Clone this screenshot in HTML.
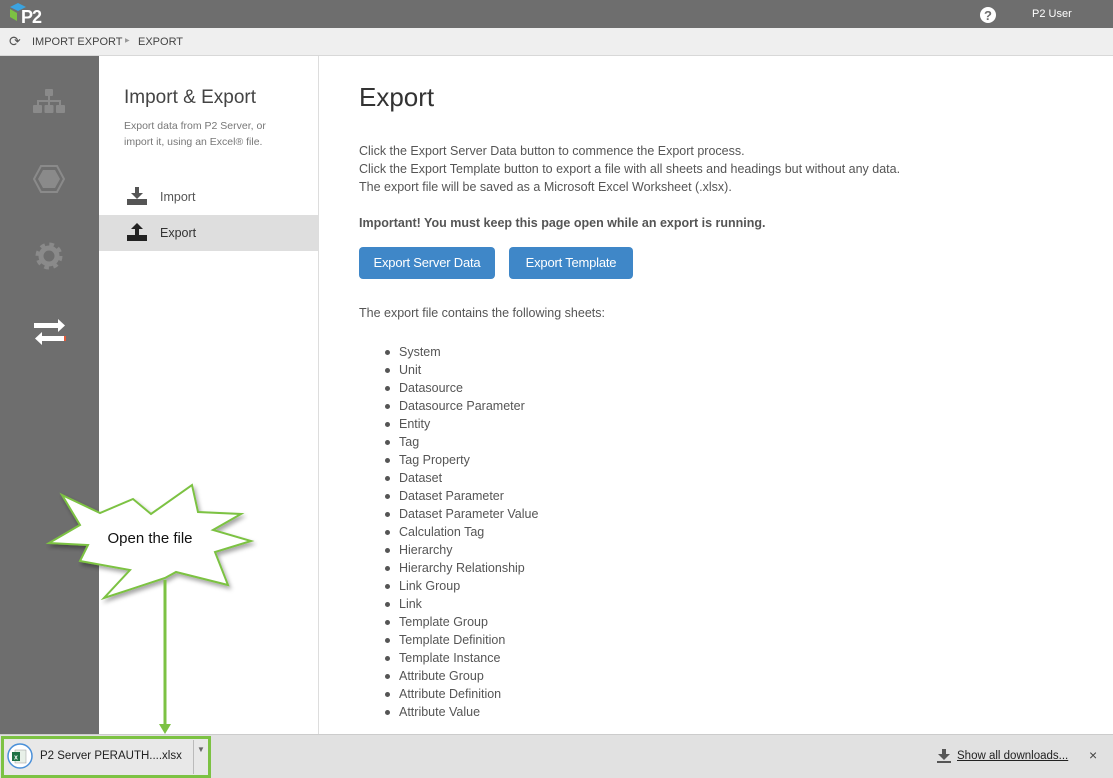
<!DOCTYPE html>
<html><head><style>
*{margin:0;padding:0;box-sizing:border-box}
body{width:1113px;height:778px;overflow:hidden;font-family:"Liberation Sans",sans-serif;background:#fff;position:relative;color:#555}
.top{position:absolute;left:0;top:0;width:1113px;height:28px;background:#6e6e6e}
.bc{position:absolute;left:0;top:28px;width:1113px;height:28px;background:#efefef;border-bottom:1px solid #d8d8d8;font-size:11px;color:#444}
.side{position:absolute;left:0;top:56px;width:99px;height:678px;background:#6e6e6e}
.panel{position:absolute;left:99px;top:56px;width:220px;height:678px;background:#fff;border-right:1px solid #ddd}
.dl{position:absolute;left:0;top:734px;width:1113px;height:44px;background:#e1e1e1;border-top:1px solid #ccc}
.btn{position:absolute;top:247px;height:32px;background:#3f87c8;color:#fff;font-size:13px;border-radius:4px;text-align:center;line-height:32px;letter-spacing:-0.2px}
ul{position:absolute;left:399px;top:343px;list-style:none;font-size:12.5px;color:#555}
ul li{height:18px;line-height:18px;position:relative}
ul li:before{content:"";position:absolute;left:-14px;top:7px;width:5px;height:5px;border-radius:50%;background:#555}
p{position:absolute;left:359px;font-size:12.5px;color:#555;white-space:nowrap}
</style></head><body>
<div class="top">
<svg style="position:absolute;left:8px;top:3px" width="44" height="22"><polygon points="2,4 10,0 18,4 10,8" fill="#3aa3e0"/><polygon points="2,6 9,10 9,18 2,14" fill="#7cc243"/><text x="13" y="20" font-family="Liberation Sans" font-weight="bold" font-size="18" fill="#fff" letter-spacing="-1">P2</text></svg>
<svg style="position:absolute;left:979px;top:6px" width="18" height="18"><circle cx="9" cy="9" r="8" fill="#fff"/><text x="9" y="14" text-anchor="middle" font-family="Liberation Sans" font-weight="bold" font-size="13" fill="#6e6e6e">?</text></svg>
<div style="position:absolute;left:1032px;top:8px;font-size:11px;color:#fff">P2 User</div>
</div>
<div class="bc">
<span style="position:absolute;left:9px;top:5px;font-size:14px;color:#555">⟳</span>
<span style="position:absolute;left:32px;top:8px">IMPORT EXPORT</span>
<span style="position:absolute;left:125px;top:9px;font-size:6px;color:#999">▶</span>
<span style="position:absolute;left:138px;top:8px">EXPORT</span>
</div>
<div class="side">
<svg style="position:absolute;left:33px;top:33px" width="32" height="28" fill="#8a8a8a"><rect x="12" y="0" width="8" height="7" rx="1"/><rect x="15" y="7" width="2" height="5"/><rect x="4" y="11" width="24" height="2"/><rect x="4" y="11" width="2" height="5"/><rect x="26" y="11" width="2" height="5"/><rect x="15" y="11" width="2" height="5"/><rect x="0" y="16" width="9" height="8" rx="1"/><rect x="11.5" y="16" width="9" height="8" rx="1"/><rect x="23" y="16" width="9" height="8" rx="1"/></svg>
<svg style="position:absolute;left:33px;top:108px" width="32" height="30"><polygon points="8,2 24,2 31,15 24,28 8,28 1,15" fill="none" stroke="#8a8a8a" stroke-width="2"/><polygon points="10,6 22,6 27,15 22,24 10,24 5,15" fill="#8a8a8a"/></svg>
<svg style="position:absolute;left:35px;top:186px" width="28" height="28"><circle cx="14" cy="14" r="10" fill="none" stroke="#8a8a8a" stroke-width="7" stroke-dasharray="4 3.85"/><circle cx="14" cy="14" r="8" fill="none" stroke="#8a8a8a" stroke-width="5"/></svg>
<svg style="position:absolute;left:33px;top:262px" width="34" height="30" fill="#fff"><rect x="1" y="5" width="26" height="5"/><polygon points="25,1 32,7.5 25,14"/><rect x="7" y="18" width="26" height="5"/><polygon points="9,14 2,20.5 9,27"/><rect x="31" y="18" width="2" height="5" fill="#e05a3a"/></svg>
</div>
<div class="panel">
<div style="position:absolute;left:25px;top:31px;font-size:19px;color:#444">Import &amp; Export</div>
<div style="position:absolute;left:25px;top:62px;font-size:10.5px;line-height:16px;color:#777">Export data from P2 Server, or<br>import it, using an Excel® file.</div>
<svg style="position:absolute;left:28px;top:131px" width="20" height="18" fill="#555"><rect x="8" y="0" width="4" height="7"/><polygon points="4,6 16,6 10,12"/><rect x="0" y="12" width="20" height="6"/></svg>
<div style="position:absolute;left:61px;top:134px;font-size:12.5px;color:#555">Import</div>
<div style="position:absolute;left:0;top:159px;width:219px;height:36px;background:#dedede"></div>
<svg style="position:absolute;left:28px;top:167px" width="20" height="18" fill="#222"><polygon points="4,6 16,6 10,0"/><rect x="8" y="5" width="4" height="7"/><rect x="0" y="12" width="20" height="6"/></svg>
<div style="position:absolute;left:61px;top:170px;font-size:12.5px;color:#333">Export</div>
</div>
<div style="position:absolute;left:359px;top:82px;font-size:26px;color:#333">Export</div>
<p style="top:142px;line-height:18px">Click the Export Server Data button to commence the Export process.<br>Click the Export Template button to export a file with all sheets and headings but without any data.<br>The export file will be saved as a Microsoft Excel Worksheet (.xlsx).</p>
<p style="top:216px;font-weight:bold">Important! You must keep this page open while an export is running.</p>
<div class="btn" style="left:359px;width:136px">Export Server Data</div>
<div class="btn" style="left:509px;width:124px">Export Template</div>
<p style="top:306px">The export file contains the following sheets:</p>
<ul>
<li>System</li><li>Unit</li><li>Datasource</li><li>Datasource Parameter</li><li>Entity</li><li>Tag</li><li>Tag Property</li><li>Dataset</li><li>Dataset Parameter</li><li>Dataset Parameter Value</li><li>Calculation Tag</li><li>Hierarchy</li><li>Hierarchy Relationship</li><li>Link Group</li><li>Link</li><li>Template Group</li><li>Template Definition</li><li>Template Instance</li><li>Attribute Group</li><li>Attribute Definition</li><li>Attribute Value</li>
</ul>
<div class="dl">
<div style="position:absolute;left:1px;top:1px;width:210px;height:42px;border:3px solid #7cc243;background:#e8e8e8"></div>
<div style="position:absolute;left:193px;top:5px;width:1px;height:34px;background:#bbb"></div>
<span style="position:absolute;left:197px;top:10px;font-size:8px;color:#666">▼</span>
<svg style="position:absolute;left:7px;top:8px" width="26" height="26"><circle cx="13" cy="13" r="12" fill="#fff" stroke="#4a90d9" stroke-width="1.5"/><rect x="8" y="7" width="11" height="13" fill="#e8f0e8" stroke="#999" stroke-width=".5"/><rect x="5" y="9" width="8" height="9" fill="#1e7145"/><text x="9" y="16.5" text-anchor="middle" font-size="7" font-family="Liberation Sans" font-weight="bold" fill="#fff">x</text></svg>
<div style="position:absolute;left:40px;top:15px;font-size:11.5px;color:#222">P2 Server PERAUTH....xlsx</div>
<svg style="position:absolute;left:936px;top:14px" width="16" height="14" fill="#555"><rect x="6" y="0" width="4" height="6"/><polygon points="2,5 14,5 8,11"/><rect x="1" y="12" width="14" height="2"/></svg>
<div style="position:absolute;left:957px;top:15px;font-size:11.5px;color:#222;text-decoration:underline">Show all downloads...</div>
<div style="position:absolute;left:1089px;top:12px;font-size:14px;color:#444">×</div>
</div>
<svg style="position:absolute;left:0;top:0;pointer-events:none" width="1113" height="778">
<defs><filter id="sh"><feDropShadow dx="2" dy="3" stdDeviation="2" flood-opacity="0.35"/></filter></defs>
<polygon filter="url(#sh)" points="62,495 100,513 133,499 151,514 192,485 198,512 241,514 213,530 251,541 215,552 228,585 176,572 165,578 104,598 130,570 80,561 88,545 49,543 80,525" fill="#fff" stroke="#7cc243" stroke-width="2"/>
<text x="150" y="543" text-anchor="middle" font-family="Liberation Sans" font-size="15" fill="#111">Open the file</text>
<line x1="165" y1="580" x2="165" y2="726" stroke="#7cc243" stroke-width="3"/>
<polygon points="159,724 171,724 165,734" fill="#7cc243"/>
</svg>
</body></html>
